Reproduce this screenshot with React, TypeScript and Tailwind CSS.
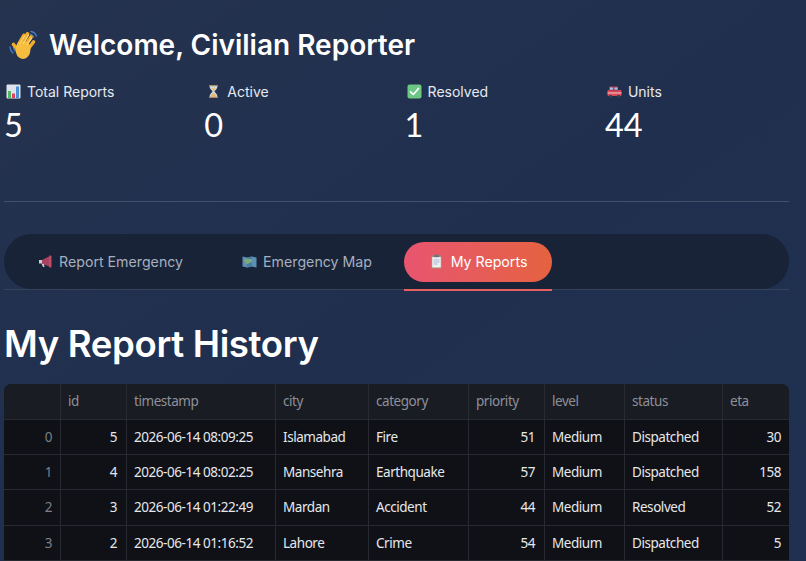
const rows = [
  { i: 0, id: 5, timestamp: '2026-06-14 08:09:25', city: 'Islamabad', category: 'Fire', priority: 51, level: 'Medium', status: 'Dispatched', eta: 30 },
  { i: 1, id: 4, timestamp: '2026-06-14 08:02:25', city: 'Mansehra', category: 'Earthquake', priority: 57, level: 'Medium', status: 'Dispatched', eta: 158 },
  { i: 2, id: 3, timestamp: '2026-06-14 01:22:49', city: 'Mardan', category: 'Accident', priority: 44, level: 'Medium', status: 'Resolved', eta: 52 },
  { i: 3, id: 2, timestamp: '2026-06-14 01:16:52', city: 'Lahore', category: 'Crime', priority: 54, level: 'Medium', status: 'Dispatched', eta: 5 },
];

const headers = ['', 'id', 'timestamp', 'city', 'category', 'priority', 'level', 'status', 'eta'];
const gridCols = 'grid grid-cols-[56px_66px_149px_93px_100px_76px_80px_98px_67px]';
const cell = 'flex items-center whitespace-nowrap border-l border-[#262930] pl-[7px] pr-[9px]';
const numCell = 'flex items-center justify-end whitespace-nowrap border-l border-[#262930] pl-[7px] pr-[9px]';
const lastCell = 'flex items-center justify-end whitespace-nowrap border-l border-[#262930] pl-[7px] pr-2';

const Wave = () => (
  <svg width="32" height="32" viewBox="0 0 32 32" className="shrink-0">
    <path d="M2 18c.2 2.500 1.200 4.500 3 6M5.500 18.500c.2 1.300.8 2.500 1.800 3.500M23 2.500c2.500.3 4.500 2 5.500 4.500M22.500 5.500c1.500.3 2.600 1.300 3.200 2.700" stroke="#4a7fc4" strokeWidth="1.300" fill="none" strokeLinecap="round" />
    <g stroke="#f0ac2e" strokeLinecap="round" fill="none">
      <path d="M11 15L16 6.500" strokeWidth="3.800" />
      <path d="M14 15L19.500 5" strokeWidth="3.800" />
      <path d="M17 17L23 8" strokeWidth="3.800" />
      <path d="M20 20L25.500 13" strokeWidth="3.600" />
      <path d="M9 20L5.500 15.500" strokeWidth="3.600" />
    </g>
    <path d="M8 17c1-3 4-5 8-4.500 4 .4 7 3 6.500 7.500-.4 4.500-1 6-3 8-2.500 2.500-6 2.500-8.500.5-2.500-2-4-6-3-11.500z" fill="#f6bd3f" />
    <path d="M12 14.500l4.500-7.500M15.500 14.500l4.800-8.500M19 15.500l4.500-6.500" stroke="#fbd266" strokeWidth="1.400" strokeLinecap="round" fill="none" />
  </svg>
);

const Chart = () => (
  <svg width="15" height="15" viewBox="0 0 15 15" className="shrink-0">
    <rect x=".5" y=".5" width="14" height="14" rx="1" fill="#dfe3ea" />
    <rect x="2" y="7" width="3" height="7" fill="#55b868" />
    <rect x="6" y="9.500" width="3" height="4.500" fill="#d9455f" />
    <rect x="10" y="2.500" width="3" height="11.500" fill="#4a90d9" />
  </svg>
);

const Hourglass = () => (
  <svg width="15" height="15" viewBox="0 0 15 15" className="shrink-0">
    <path d="M3.500 2h8c0 3-2.500 4.300-3 5.500.5 1.200 3 2.500 3 5.500h-8c0-3 2.500-4.300 3-5.500-.5-1.200-3-2.500-3-5.500z" fill="#cfdbe6" />
    <path d="M4.500 12.500c.6-2 2-2.800 3-3.500 1 .7 2.400 1.500 3 3.500zM5 4.500h5c-.6 1.300-2 2-2.500 3-.5-1-1.900-1.700-2.500-3z" fill="#e8bb63" />
    <rect x="3" y="1" width="9" height="1.300" rx=".5" fill="#b08a5a" />
    <rect x="3" y="12.700" width="9" height="1.300" rx=".5" fill="#b08a5a" />
  </svg>
);

const Check = () => (
  <svg width="15" height="15" viewBox="0 0 15 15" className="shrink-0">
    <rect x=".5" y=".5" width="14" height="14" rx="2" fill="#6cc783" />
    <path d="M3.500 7.800l2.800 2.700 5.200-6" stroke="#fff" strokeWidth="1.700" fill="none" strokeLinecap="round" strokeLinejoin="round" />
  </svg>
);

const Engine = () => (
  <svg width="15" height="15" viewBox="0 0 15 15" className="shrink-0">
    <rect x=".5" y="6" width="14" height="6" rx="1" fill="#d9475a" />
    <rect x="2" y="2.500" width="9" height="4.500" rx=".6" fill="#b93a4e" />
    <rect x="3" y="3.500" width="3" height="2.200" fill="#9fc6e8" />
    <rect x="7.500" y="3.500" width="3" height="2.200" fill="#9fc6e8" />
    <rect x=".5" y="8.500" width="14" height="1" fill="#f0d4c4" />
    <circle cx="3.500" cy="12.300" r="1.500" fill="#3b3f4a" />
    <circle cx="11.500" cy="12.300" r="1.500" fill="#3b3f4a" />
  </svg>
);

const Megaphone = () => (
  <svg width="15" height="15" viewBox="0 0 15 15" className="shrink-0">
    <path d="M1 6h3v3.500H1z" fill="#c9ccd4" />
    <path d="M4 6l7-3.500v10L4 9.500z" fill="#a9415f" />
    <rect x="11" y="1.500" width="2.500" height="12" rx="1" fill="#c04a6a" />
    <path d="M3.500 9.500l1.500 3.500h1.500L6 10z" fill="#c9ccd4" />
  </svg>
);

const MapIcon = () => (
  <svg width="15" height="15" viewBox="0 0 15 15" className="shrink-0">
    <path d="M.5 2.500l4.500 1 5-1 4.500 1v10l-4.500-1-5 1-4.500-1z" fill="#5c8fb5" />
    <path d="M5 3.500l5-1v10l-5 1z" fill="#4a7c9f" />
    <path d="M3 5c2-1 3 .5 5 0s2.500 1 2 2.500-2.500 1-3.500 2-2.500.5-3.500-1-1-2.500 0-3.500z" fill="#7da77c" />
  </svg>
);

const Clipboard = () => (
  <svg width="15" height="15" viewBox="0 0 15 15" className="shrink-0">
    <rect x="2" y="1.500" width="11" height="13" rx="1" fill="#a8896a" />
    <rect x="3.200" y="3" width="8.600" height="10.500" fill="#eef0f5" />
    <rect x="4.500" y="5.500" width="6" height="1" fill="#a9b8d4" />
    <rect x="4.500" y="7.500" width="6" height="1" fill="#a9b8d4" />
    <rect x="4.500" y="9.500" width="4" height="1" fill="#a9b8d4" />
    <rect x="5" y=".7" width="5" height="2.500" rx=".5" fill="#6f7480" />
  </svg>
);

const Metric = ({ icon, label, value }: { icon: React.ReactNode; label: string; value: number }) => (
  <div className="min-w-0">
    <div className="flex items-center gap-[6px] h-5 pl-[2px] text-[14px] text-[#e6eaf0] font-['Inter',sans-serif]">
      {icon}
      <span>{label}</span>
    </div>
    <div className="mt-[3px] text-[32.500px] leading-[42px] text-white font-['Lato',sans-serif]">{value}</div>
  </div>
);

const Tab = ({ icon, label, active }: { icon: React.ReactNode; label: string; active?: boolean }) => (
  <div className="relative">
    <div
      className={
        active
          ? 'flex items-center justify-center gap-[7px] w-[148px] h-10 rounded-[20px] bg-gradient-to-r from-[#e8556f] to-[#e5623f] text-[14.200px] text-white'
          : 'flex items-center gap-[6px] h-10 text-[14.200px] text-[#a6afbe]'
      }
    >
      {icon}
      <span>{label}</span>
    </div>
    {active && <div className="absolute left-0 right-0 top-[47px] h-[2px] bg-[#e5605f]" />}
  </div>
);

export default function App() {
  return (
    <div className="h-[561px] w-[806px] overflow-hidden bg-gradient-to-br from-[#25334f] via-[#202f4e] to-[#1f3050] px-[4px] pr-[17px] font-['Inter',sans-serif]">
      <div className="flex items-center gap-[9px] pt-[29px] pl-[4px] h-[61px]">
        <Wave />
        <h1 className="text-[28px] leading-[32px] font-semibold text-white">Welcome, Civilian Reporter</h1>
      </div>

      <div className="grid grid-cols-[200.300px_200.300px_200.300px_1fr] mt-5">
        <Metric icon={<Chart />} label="Total Reports" value={5} />
        <Metric icon={<Hourglass />} label="Active" value={0} />
        <Metric icon={<Check />} label="Resolved" value={1} />
        <Metric icon={<Engine />} label="Units" value={44} />
      </div>

      <div className="mt-[55px] h-px bg-[#42506b]" />

      <div className="mt-[32px] border-b border-[#35425a]">
        <div className="h-[55px] rounded-[28px] bg-[#182338] flex items-center pl-[34px]">
          <Tab icon={<Megaphone />} label="Report Emergency" />
          <div className="w-[59px]" />
          <Tab icon={<MapIcon />} label="Emergency Map" />
          <div className="w-[32px]" />
          <Tab icon={<Clipboard />} label="My Reports" active />
        </div>
      </div>

      <h2 className="mt-[30px] text-[36.600px] leading-[48px] font-semibold text-white tracking-[-0.35px]">My Report History</h2>

      <div className="mt-[16px] w-[785px] rounded-t-[8px] overflow-hidden bg-[#0f1116] text-[13.500px] tracking-[-0.45px] font-['Noto_Sans',sans-serif]">
        <div className={`${gridCols} h-[35.500px] bg-[#1a1c24] text-[#8d9098] border-b border-[#272a31]`}>
          {headers.map((h, idx) => (
            <div key={idx} className={idx === 0 ? 'flex items-center' : 'flex items-center border-l border-[#272a31] pl-[7px]'}>{h}</div>
          ))}
        </div>
        {rows.map((r) => (
          <div key={r.i} className={`${gridCols} h-[35.400px] text-[#e6e8ec] border-b border-[#262930]`}>
            <div className="flex items-center justify-end pr-2 text-[#7d8088]">{r.i}</div>
            <div className={numCell}>{r.id}</div>
            <div className={cell}>{r.timestamp}</div>
            <div className={cell}>{r.city}</div>
            <div className={cell}>{r.category}</div>
            <div className={numCell}>{r.priority}</div>
            <div className={cell}>{r.level}</div>
            <div className={cell}>{r.status}</div>
            <div className={lastCell}>{r.eta}</div>
          </div>
        ))}
      </div>
    </div>
  );
}
